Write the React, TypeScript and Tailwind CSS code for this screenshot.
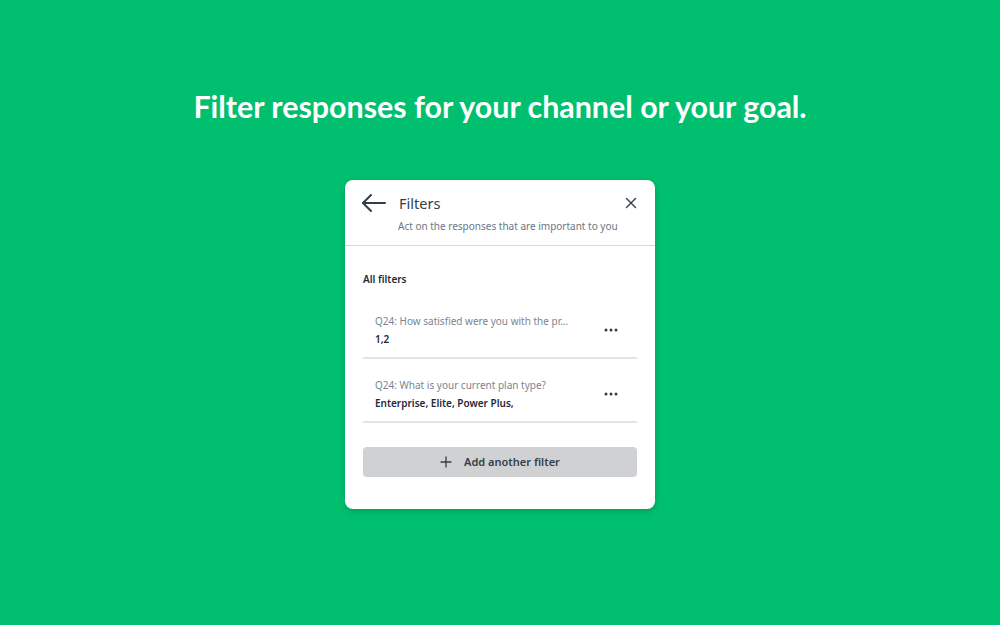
import React from 'react';

const filters = [
  { question: 'Q24: How satisfied were you with the pr...', answer: '1,2' },
  { question: 'Q24: What is your current plan type?', answer: 'Enterprise, Elite, Power Plus,' },
];

function Dots() {
  return (
    <svg width="14" height="4" viewBox="0 0 14 4" className="text-[#333e48]">
      <circle cx="2" cy="2" r="1.5" fill="currentColor" />
      <circle cx="7" cy="2" r="1.5" fill="currentColor" />
      <circle cx="12" cy="2" r="1.5" fill="currentColor" />
    </svg>
  );
}

export default function App() {
  return (
    <div className="w-[1000px] h-[625px] bg-[#00bf6f] flex flex-col items-center overflow-hidden">
      <h1 className="mt-[86px] text-white text-[30.4px] font-bold leading-[40px] font-['Lato',sans-serif]">
        Filter responses for your channel or your goal.
      </h1>

      <div className="mt-[54px] w-[310px] bg-white rounded-lg shadow-[0_2px_6px_rgba(0,0,0,0.18)] font-['Noto_Sans',sans-serif] text-[#333e48]">
        <div className="px-4 pt-[13px] pb-[11px] border-b border-[#d6d8da]">
          <div className="flex items-center">
            <svg width="26" height="20" viewBox="0 0 26 20" fill="none" stroke="#333e48" strokeWidth="2" strokeLinecap="round" strokeLinejoin="round">
              <path d="M24 10H2" />
              <path d="M10 2L2 10l8 8" />
            </svg>
            <span className="ml-[12px] text-[14.5px] leading-5">Filters</span>
            <svg className="ml-auto mr-[2px]" width="12" height="12" viewBox="0 0 12 12" stroke="#333e48" strokeWidth="1.4" strokeLinecap="round">
              <path d="M1.5 1.5l9 9M10.5 1.5l-9 9" />
            </svg>
          </div>
          <p className="ml-[37px] mt-[5px] text-[10px] leading-4 text-[#6b7787]">
            Act on the responses that are important to you
          </p>
        </div>

        <div className="px-[18px] pt-[25px] pb-[32px]">
          <p className="text-[10px] font-semibold text-[#1f2a36] leading-4">All filters</p>
          <div className="mt-[8px]">
            {filters.map((f) => (
              <div key={f.question} className="flex items-center pl-3 pr-[19px] pt-[18px] pb-[10px] border-b-2 border-[#e4e5e7]">
                <div className="flex-1 min-w-0">
                  <p className="text-[10px] leading-4 text-[#7b8591] truncate">{f.question}</p>
                  <p className="mt-[2px] text-[10px] leading-4 font-semibold text-[#1f2a36]">{f.answer}</p>
                </div>
                <Dots />
              </div>
            ))}
          </div>
          <button className="mt-[24px] w-full h-[30px] rounded bg-[#d0d1d3] flex items-center justify-center gap-[12px] text-[11px] font-semibold text-[#333e48]">
            <svg width="12" height="12" viewBox="0 0 12 12" stroke="#333e48" strokeWidth="1.3" strokeLinecap="round">
              <path d="M6 1v10M1 6h10" />
            </svg>
            Add another filter
          </button>
        </div>
      </div>
    </div>
  );
}
